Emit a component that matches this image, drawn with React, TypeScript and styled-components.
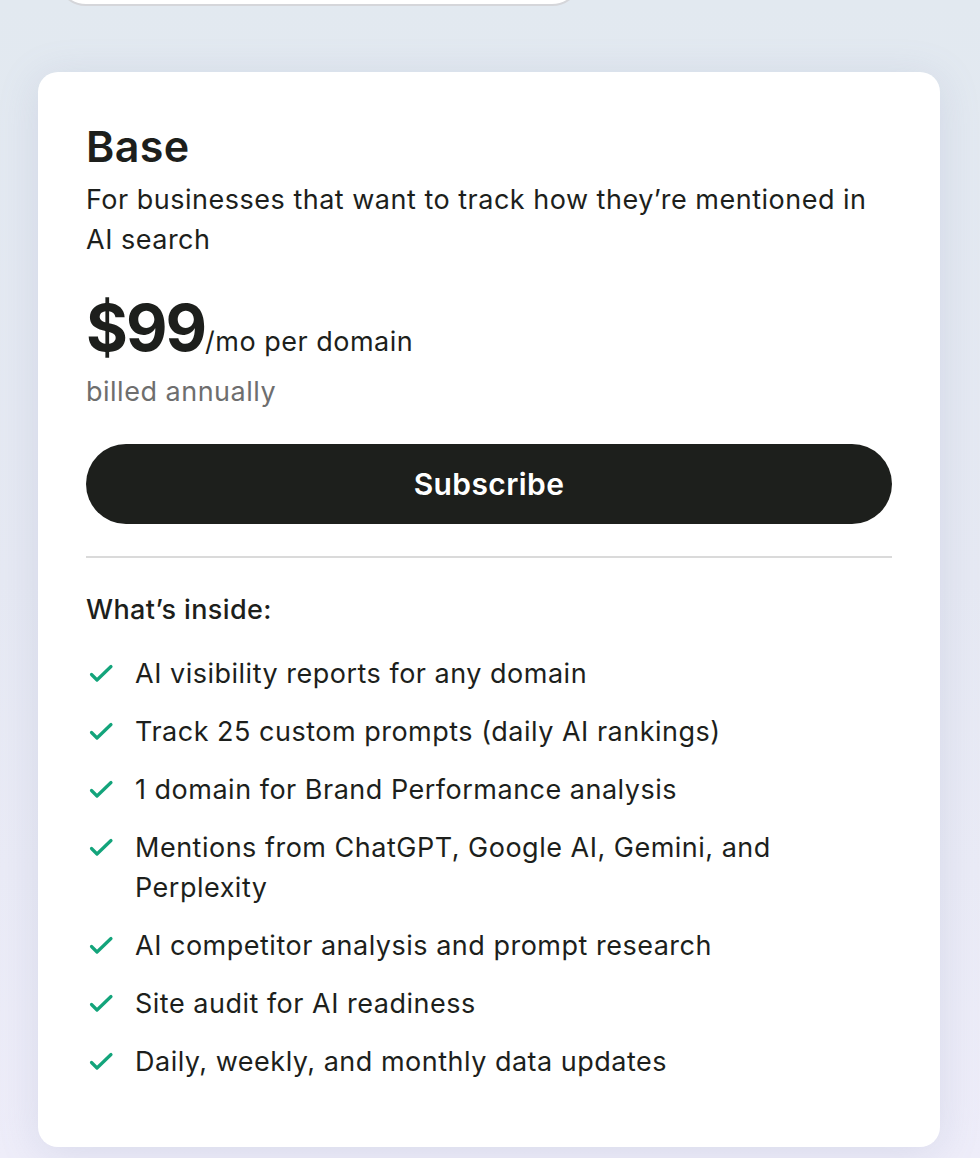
import styled, { createGlobalStyle } from 'styled-components'

const GlobalStyle = createGlobalStyle`
  html, body {
    margin: 0;
    padding: 0;
  }
  body {
    font-family: Inter, 'Noto Sans', sans-serif;
    color: #1d1f1c;
    -webkit-font-smoothing: antialiased;
  }
`

const Page = styled.div`
  min-height: 1158px;
  overflow: hidden;
  background: linear-gradient(180deg, #e2e9f0 0%, #e6e9f3 50%, #eeedf9 100%);
`

const TopPill = styled.div`
  width: 526px;
  height: 60px;
  margin: -54px 0 0 56px;
  background: #fff;
  border: 2px solid #d5d6da;
  border-radius: 30px;
  box-sizing: border-box;
`

const Card = styled.section`
  width: 902px;
  margin: 66px 0 0 38px;
  box-sizing: border-box;
  padding: 48px 48px 65px;
  background: #fff;
  border-radius: 20px;
  box-shadow: 0 6px 40px rgba(120, 132, 180, 0.18);
`

const Title = styled.h2`
  margin: 0 0 8px;
  font-size: 43px;
  line-height: 52px;
  font-weight: 600;
  letter-spacing: 0.4px;
`

const Description = styled.p`
  margin: 0;
  font-size: 27px;
  line-height: 40px;
  letter-spacing: 0.5px;
`

const PriceRow = styled.div`
  display: flex;
  align-items: baseline;
  margin-top: 32px;
  height: 72px;
`

const Amount = styled.span`
  font-size: 64px;
  line-height: 72px;
  font-weight: 700;
  letter-spacing: -2px;
`

const Period = styled.span`
  font-size: 27px;
  font-weight: 400;
  letter-spacing: 0.5px;
`

const Billing = styled.div`
  margin-top: 8px;
  font-size: 27px;
  line-height: 40px;
  letter-spacing: 0.5px;
  color: #6e6e6e;
`

const SubscribeButton = styled.button`
  display: block;
  width: 100%;
  height: 80px;
  margin-top: 32px;
  border: none;
  border-radius: 40px;
  background: #1d1f1c;
  color: #fff;
  font-family: inherit;
  font-size: 30px;
  font-weight: 600;
  letter-spacing: 0.4px;
  cursor: pointer;
`

const Divider = styled.hr`
  margin: 32px 0 0;
  border: none;
  height: 2px;
  background: #dadada;
`

const SectionLabel = styled.h3`
  margin: 32px 0 0;
  font-size: 27px;
  line-height: 40px;
  font-weight: 500;
  letter-spacing: 0.4px;
`

const FeatureList = styled.ul`
  list-style: none;
  margin: 24px 0 0;
  padding: 0;
  display: flex;
  flex-direction: column;
  gap: 18px;
`

const Feature = styled.li`
  display: flex;
  align-items: flex-start;
  gap: 21px;
  font-size: 27px;
  line-height: 40px;
  letter-spacing: 0.5px;
`

const CheckIcon = styled.svg`
  flex: 0 0 28px;
  width: 28px;
  height: 24px;
  margin-top: 8px;
`

const features = [
  'AI visibility reports for any domain',
  'Track 25 custom prompts (daily AI rankings)',
  '1 domain for Brand Performance analysis',
  'Mentions from ChatGPT, Google AI, Gemini, and Perplexity',
  'AI competitor analysis and prompt research',
  'Site audit for AI readiness',
  'Daily, weekly, and monthly data updates',
]

const Check = () => (
  <CheckIcon viewBox="0 0 28 24" fill="none">
    <path
      d="M5.5 12.5 L11 18 L25 4.5"
      stroke="#13a47b"
      strokeWidth="3.2"
      strokeLinecap="round"
      strokeLinejoin="round"
    />
  </CheckIcon>
)

const App = () => {
  return (
    <>
      <GlobalStyle />
      <Page>
        <TopPill />
        <Card>
          <Title>Base</Title>
          <Description>
            For businesses that want to track how they’re mentioned in AI search
          </Description>
          <PriceRow>
            <Amount>$99</Amount>
            <Period>/mo per domain</Period>
          </PriceRow>
          <Billing>billed annually</Billing>
          <SubscribeButton>Subscribe</SubscribeButton>
          <Divider />
          <SectionLabel>What’s inside:</SectionLabel>
          <FeatureList>
            {features.map((text, index) => (
              <Feature key={index}>
                <Check />
                <span>{text}</span>
              </Feature>
            ))}
          </FeatureList>
        </Card>
      </Page>
    </>
  )
}

export default App
